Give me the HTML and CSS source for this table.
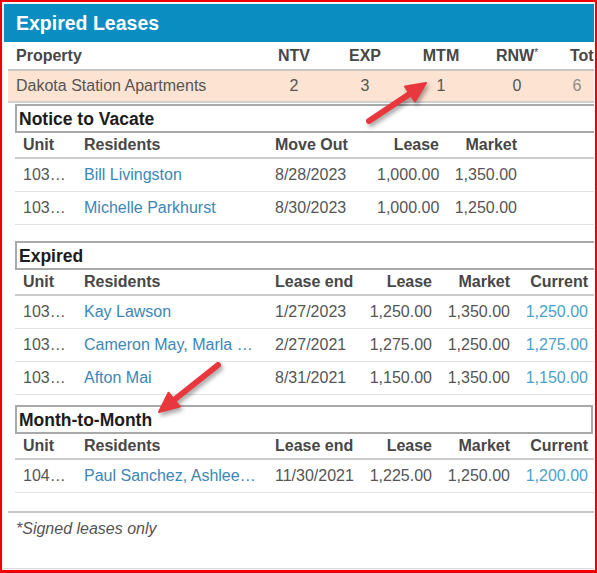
FILE: index.html
```html
<!DOCTYPE html>
<html>
<head>
<meta charset="utf-8">
<link rel="stylesheet" href="styles.css">
</head>
<body>
<div class="frame">
  <div class="panel">
    <div class="title">Expired Leases</div>
    <div class="body">
      <table class="summary">
        <colgroup><col class="c-prop"><col class="c-ntv"><col class="c-exp"><col class="c-mtm"><col class="c-rnw"><col class="c-tot"></colgroup>
        <thead>
          <tr><th class="left">Property</th><th>NTV</th><th>EXP</th><th>MTM</th><th>RNW<sup>*</sup></th><th class="tot">Total</th></tr>
        </thead>
        <tbody>
          <tr><td class="left">Dakota Station Apartments</td><td>2</td><td>3</td><td>1</td><td>0</td><td class="muted">6</td></tr>
        </tbody>
      </table>

      <div class="section wide first">
        <div class="section-title">Notice to Vacate</div>
        <table class="detail">
          <colgroup><col class="d-unit"><col class="d-res"><col class="d-date-w"><col class="d-num-w"><col class="d-num"><col class="d-num"></colgroup>
          <thead><tr><th>Unit</th><th>Residents</th><th>Move Out</th><th class="num">Lease</th><th class="num">Market</th><th></th></tr></thead>
          <tbody>
            <tr><td>103…</td><td class="link">Bill Livingston</td><td>8/28/2023</td><td class="num">1,000.00</td><td class="num">1,350.00</td><td></td></tr>
            <tr><td>103…</td><td class="link">Michelle Parkhurst</td><td>8/30/2023</td><td class="num">1,000.00</td><td class="num">1,250.00</td><td></td></tr>
          </tbody>
        </table>
      </div>

      <div class="section wide second">
        <div class="section-title">Expired</div>
        <table class="detail">
          <colgroup><col class="d-unit"><col class="d-res"><col class="d-date"><col class="d-num"><col class="d-num"><col class="d-num"></colgroup>
          <thead><tr><th>Unit</th><th>Residents</th><th>Lease end</th><th class="num">Lease</th><th class="num">Market</th><th class="num">Current</th></tr></thead>
          <tbody>
            <tr><td>103…</td><td class="link">Kay Lawson</td><td>1/27/2023</td><td class="num">1,250.00</td><td class="num">1,350.00</td><td class="num current">1,250.00</td></tr>
            <tr><td>103…</td><td class="link">Cameron May, Marla …</td><td>2/27/2021</td><td class="num">1,275.00</td><td class="num">1,250.00</td><td class="num current">1,275.00</td></tr>
            <tr><td>103…</td><td class="link">Afton Mai</td><td>8/31/2021</td><td class="num">1,150.00</td><td class="num">1,350.00</td><td class="num current">1,150.00</td></tr>
          </tbody>
        </table>
      </div>

      <div class="section third">
        <div class="section-title">Month-to-Month</div>
        <table class="detail">
          <colgroup><col class="d-unit"><col class="d-res"><col class="d-date"><col class="d-num"><col class="d-num"><col class="d-num"></colgroup>
          <thead><tr><th>Unit</th><th>Residents</th><th>Lease end</th><th class="num">Lease</th><th class="num">Market</th><th class="num">Current</th></tr></thead>
          <tbody>
            <tr><td>104…</td><td class="link">Paul Sanchez, Ashlee…</td><td>11/30/2021</td><td class="num">1,225.00</td><td class="num">1,250.00</td><td class="num current">1,200.00</td></tr>
          </tbody>
        </table>
      </div>

      <div class="footnote">*Signed leases only</div>
    </div>
  </div>

  <svg class="arrows" width="597" height="573" viewBox="0 0 597 573">
    <g class="arrow">
      <line x1="369" y1="121" x2="411" y2="93" />
      <polygon points="426,83 414.9,101.4 405.1,86.6" />
    </g>
    <g class="arrow">
      <line x1="218" y1="365" x2="174" y2="400" />
      <polygon points="159,412 179.7,406.6 168.5,392.7" />
    </g>
  </svg>
</div>
</body>
</html>
```

FILE: styles.css
```css
html, body {
  margin: 0;
  padding: 0;
  background: #ffffff;
}

.frame {
  position: relative;
  width: 597px;
  height: 573px;
  box-sizing: border-box;
  border: 2px solid #f00000;
  border-bottom-width: 3px;
  background: #f4f4f4;
  font-family: "Liberation Sans", Arial, sans-serif;
  overflow: hidden;
}

.panel {
  margin: 2px 1px 0 2px;
  height: 565px;
  box-sizing: border-box;
  background: #ffffff;
  border-bottom: 1px solid #dcdcdc;
  overflow: hidden;
}

.title {
  height: 38px;
  background: #0a8ec2;
  color: #ffffff;
  font-weight: bold;
  font-size: 19.5px;
  line-height: 38px;
  padding-left: 12px;
}

.body {
  padding-left: 4px;
}

table {
  border-collapse: collapse;
  table-layout: fixed;
}

.summary {
  width: 594px;
}

.c-prop { width: 250px; }
.c-ntv { width: 72px; }
.c-exp { width: 70px; }
.c-mtm { width: 82px; }
.c-rnw { width: 70px; }
.c-tot { width: 50px; }

.summary th {
  height: 27px;
  padding: 0;
  font-size: 16px;
  font-weight: bold;
  color: #474747;
  text-align: center;
  vertical-align: middle;
  border-bottom: 2px solid #c6c6c6;
  white-space: nowrap;
  overflow: hidden;
}

.summary th.tot {
  text-align: left;
  padding-left: 18px;
}

.summary th sup {
  font-size: 10px;
  font-weight: normal;
  vertical-align: 5px;
}

.summary td {
  height: 30px;
  padding: 0;
  font-size: 16px;
  color: #555555;
  text-align: center;
  background: #fde3d1;
  border-bottom: 2px solid #cfcfcf;
}

.summary .left {
  text-align: left;
  padding-left: 8px;
}

.summary td.muted {
  color: #8a8a8a;
}

.section {
  margin-left: 7px;
  width: 578px;
}

.section.wide {
  width: 600px;
}

.section.first { margin-top: 1px; }
.section.second { margin-top: 16px; }
.section.third { margin-top: 10px; }

.section-title {
  height: 29px;
  box-sizing: border-box;
  border: 2px solid #a9a9a9;
  padding-left: 2px;
  font-size: 17.5px;
  font-weight: bold;
  color: #1c1c1c;
  line-height: 27px;
}

.detail {
  width: 580px;
}

.d-unit { width: 62px; }
.d-res { width: 191px; }
.d-date { width: 94px; }
.d-date-w { width: 102px; }
.d-num { width: 78px; }
.d-num-w { width: 77px; }

.detail th {
  height: 24px;
  padding: 0 7px;
  font-size: 16px;
  font-weight: bold;
  color: #474747;
  text-align: left;
  vertical-align: middle;
  border-bottom: 2px solid #cccccc;
  white-space: nowrap;
}

.detail td {
  height: 32px;
  padding: 0 7px;
  font-size: 16px;
  color: #555555;
  text-align: left;
  vertical-align: middle;
  border-bottom: 1px solid #e2e2e2;
  white-space: nowrap;
  overflow: hidden;
}

.detail th:first-child,
.detail td:first-child {
  padding-left: 8px;
}

.detail .num {
  text-align: right;
  padding-right: 8px;
}

.detail td.link {
  color: #3d86b6;
}

.detail td.current {
  color: #4ba1cb;
}

.footnote {
  margin-top: 18px;
  border-top: 2px solid #c8c8c8;
  padding: 6px 0 0 8px;
  font-size: 16px;
  font-style: italic;
  color: #555555;
  line-height: 20px;
}

.arrows {
  position: absolute;
  left: -2px;
  top: -2px;
  pointer-events: none;
}

.arrow {
  filter: drop-shadow(2px 3px 2px rgba(0, 0, 0, 0.35));
}

.arrow line {
  stroke: #e8373d;
  stroke-width: 6;
  stroke-linecap: round;
}

.arrow polygon {
  fill: #e8373d;
  stroke: #e8373d;
  stroke-width: 2;
  stroke-linejoin: round;
}
```
